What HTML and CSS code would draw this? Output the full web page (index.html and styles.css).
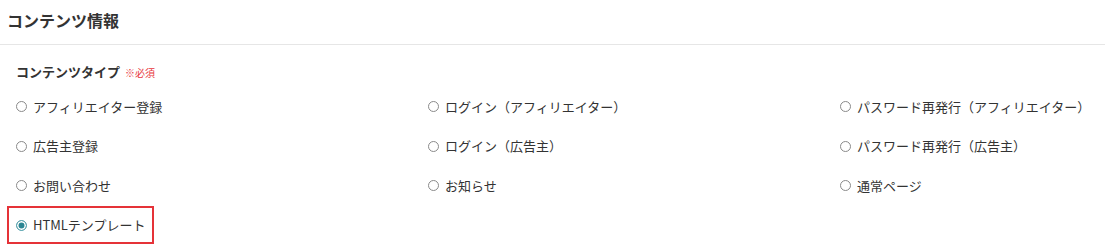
FILE: index.html
```html
<!DOCTYPE html>
<html lang="ja">
<head>
    <meta charset="UTF-8">
    <meta name="viewport" content="width=device-width, initial-scale=1.0">
    <title>コンテンツ情報</title>
    <link rel="stylesheet" href="styles.css">
</head>
<body>
    <div class="panel-head">
        <h2>コンテンツ情報</h2>
    </div>
    <div class="panel-body">
        <div class="field-label">コンテンツタイプ <span class="required">※必須</span></div>
        <div class="radio-grid">
            <label class="radio-item"><input type="radio" name="type">アフィリエイター登録</label>
            <label class="radio-item"><input type="radio" name="type">ログイン（アフィリエイター）</label>
            <label class="radio-item"><input type="radio" name="type">パスワード再発行（アフィリエイター）</label>
            <label class="radio-item"><input type="radio" name="type">広告主登録</label>
            <label class="radio-item"><input type="radio" name="type">ログイン（広告主）</label>
            <label class="radio-item"><input type="radio" name="type">パスワード再発行（広告主）</label>
            <label class="radio-item"><input type="radio" name="type">お問い合わせ</label>
            <label class="radio-item"><input type="radio" name="type">お知らせ</label>
            <label class="radio-item"><input type="radio" name="type">通常ページ</label>
            <label class="radio-item highlight"><input type="radio" name="type" checked>HTMLテンプレート</label>
        </div>
    </div>
</body>
</html>
```

FILE: styles.css
```css
body {
    margin: 0;
    font-family: "Noto Sans CJK JP", "Noto Sans", sans-serif;
    color: #333333;
    background: #ffffff;
}
.panel-head {
    height: 44px;
    padding-left: 7px;
    border-bottom: 1px solid #e6e6e6;
}
.panel-head h2 {
    margin: 0;
    font-size: 16px;
    font-weight: bold;
    line-height: 40px;
    color: #333333;
}
.panel-body { padding: 17px 0 0 16px; }
.field-label {
    font-size: 13px;
    font-weight: bold;
    line-height: 20px;
    margin-bottom: 4px;
}
.required {
    color: #e8383d;
    font-size: 10px;
    font-weight: normal;
    margin-left: 2px;
}
.radio-grid {
    display: grid;
    grid-template-columns: 412px 412px 1fr;
    grid-auto-rows: 39.5px;
    align-items: center;
}
.radio-item {
    display: flex;
    align-items: center;
    width: max-content;
    height: 20px;
    font-size: 13px;
    line-height: 20px;
    cursor: pointer;
}
.radio-item input {
    appearance: none;
    -webkit-appearance: none;
    width: 11px;
    height: 11px;
    margin: 0 6px 0 0;
    border: 1px solid #8a8a8a;
    border-radius: 50%;
    background: #ffffff;
}
.radio-item input:checked {
    border-color: #5aa5b0;
    background: #2a8593;
    box-shadow: inset 0 0 0 1.5px #ffffff;
}
.highlight {
    outline: 2px solid #e53238;
    outline-offset: 7px;
}
```
